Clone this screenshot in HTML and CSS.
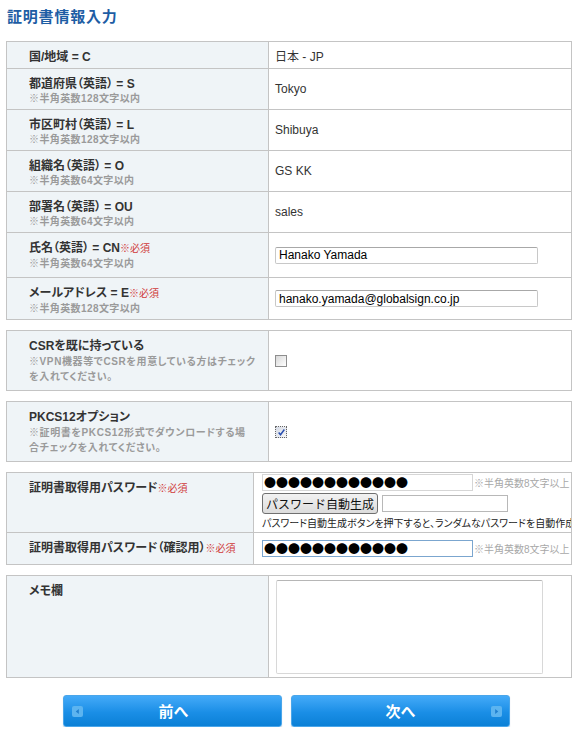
FILE: index.html
```html
<!DOCTYPE html>
<html lang="ja">
<head>
<meta charset="utf-8">
<title>証明書情報入力</title>
<link rel="stylesheet" href="styles.css">
</head>
<body>
<div class="page">
  <h1 class="title">証明書情報入力</h1>

  <table class="form">
    <colgroup><col class="c-label"><col></colgroup>
    <tr>
      <th class="label"><span class="main">国/地域 = C</span></th>
      <td class="value">日本 - JP</td>
    </tr>
    <tr>
      <th class="label"><span class="main">都道府県（英語） = S</span><span class="note">※半角英数128文字以内</span></th>
      <td class="value">Tokyo</td>
    </tr>
    <tr>
      <th class="label"><span class="main">市区町村（英語） = L</span><span class="note">※半角英数128文字以内</span></th>
      <td class="value">Shibuya</td>
    </tr>
    <tr>
      <th class="label"><span class="main">組織名（英語） = O</span><span class="note">※半角英数64文字以内</span></th>
      <td class="value">GS KK</td>
    </tr>
    <tr>
      <th class="label"><span class="main">部署名（英語） = OU</span><span class="note">※半角英数64文字以内</span></th>
      <td class="value">sales</td>
    </tr>
    <tr class="tall">
      <th class="label"><span class="main">氏名（英語） = CN<span class="req">※必須</span></span><span class="note">※半角英数64文字以内</span></th>
      <td class="value"><input class="field wide" type="text" value="Hanako Yamada"></td>
    </tr>
    <tr>
      <th class="label"><span class="main">メールアドレス = E<span class="req">※必須</span></span><span class="note">※半角英数128文字以内</span></th>
      <td class="value"><input class="field wide" type="text" value="hanako.yamada@globalsign.co.jp"></td>
    </tr>
  </table>

  <table class="form box">
    <colgroup><col class="c-label"><col></colgroup>
    <tr>
      <th class="label"><span class="main">CSRを既に持っている</span><span class="note spaced">※VPN機器等でCSRを用意している方はチェック<br>を入れてください。</span></th>
      <td class="value"><label class="chk"><input type="checkbox"><span class="box-mark"><svg viewBox="0 0 11 11" width="9" height="9"><path d="M2 5.5 L4.3 8.2 L9 1.8" fill="none" stroke="#2a4fb0" stroke-width="1.8"/></svg></span></label></td>
    </tr>
  </table>

  <table class="form box">
    <colgroup><col class="c-label"><col></colgroup>
    <tr>
      <th class="label"><span class="main">PKCS12オプション</span><span class="note spaced">※証明書をPKCS12形式でダウンロードする場<br>合チェックを入れてください。</span></th>
      <td class="value"><label class="chk"><input type="checkbox" checked><span class="box-mark"><svg viewBox="0 0 11 11" width="9" height="9"><path d="M2 5.5 L4.3 8.2 L9 1.8" fill="none" stroke="#2a4fb0" stroke-width="1.8"/></svg></span></label></td>
    </tr>
  </table>

  <table class="form pw">
    <colgroup><col class="c-label-pw"><col></colgroup>
    <tr>
      <th class="label top"><span class="main">証明書取得用パスワード<span class="req">※必須</span></span></th>
      <td class="value pwcell">
        <div class="pwline"><input class="field dots" type="text" value="●●●●●●●●●●●●"><span class="hint">※半角英数8文字以上</span></div>
        <div class="genline"><button class="gen" type="button">パスワード自動生成</button><input class="field gen-out" type="text"></div>
        <div class="explain">パスワード自動生成ボタンを押下すると、ランダムなパスワードを自動作成します。</div>
      </td>
    </tr>
    <tr>
      <th class="label mid"><span class="main">証明書取得用パスワード（確認用）<span class="req">※必須</span></span></th>
      <td class="value pwcell2">
        <div class="pwline"><input class="field dots focus" type="text" value="●●●●●●●●●●●●"><span class="hint">※半角英数8文字以上</span></div>
      </td>
    </tr>
  </table>

  <table class="form memo">
    <colgroup><col class="c-label"><col></colgroup>
    <tr>
      <th class="label top"><span class="main">メモ欄</span></th>
      <td class="value memocell"><textarea class="memo-area"></textarea></td>
    </tr>
  </table>

  <div class="nav">
    <button class="btn" type="button">
      <span class="ico"><svg viewBox="0 0 11 11" width="11" height="11"><rect x="0" y="0" width="11" height="11" rx="2" fill="#5cb4f0"/><path d="M6.8 3 L3.8 5.5 L6.8 8 Z" fill="#1f7fcf"/></svg></span>
      <span class="btn-text">前へ</span>
      <span></span>
    </button>
    <button class="btn" type="button">
      <span></span>
      <span class="btn-text">次へ</span>
      <span class="ico"><svg viewBox="0 0 11 11" width="11" height="11"><rect x="0" y="0" width="11" height="11" rx="2" fill="#5cb4f0"/><path d="M4.2 3 L7.2 5.5 L4.2 8 Z" fill="#1f7fcf"/></svg></span>
    </button>
  </div>
</div>
</body>
</html>
```
FILE: styles.css
```css
html, body {
  margin: 0;
  padding: 0;
  background: #ffffff;
}
body {
  font-family: "Liberation Sans", "Noto Sans CJK JP", sans-serif;
  font-feature-settings: "palt";
  color: #333333;
  font-size: 12px;
}
.page {
  width: 566px;
  padding: 0 6px;
}
.title {
  margin: 0 0 16px 1px;
  padding-top: 8px;
  font-size: 15px;
  line-height: 17px;
  font-weight: bold;
  color: #1d5da4;
  letter-spacing: 0.8px;
}
.form {
  width: 566px;
  border-collapse: collapse;
  table-layout: fixed;
  margin-bottom: 10px;
}
.form th, .form td {
  border: 1px solid #c4c4c4;
}
.c-label { width: 262px; }
.c-label-pw { width: 247px; }
.label {
  background: #eff4f7;
  text-align: left;
  font-weight: bold;
  padding: 7px 4px 3px 22px;
  vertical-align: top;
  white-space: nowrap;
}
.tall .label { padding-bottom: 6px; }
.label .main {
  display: block;
  font-size: 12px;
  line-height: 16px;
  color: #333333;
}
.label .note {
  display: block;
  font-size: 10px;
  line-height: 14px;
  color: #9a9a9a;
  letter-spacing: 0.4px;
}
.label .note.spaced {
  line-height: 15px;
  letter-spacing: 0.6px;
}
.box .label { padding-bottom: 6px; }
.req {
  font-weight: normal;
  font-size: 10px;
  color: #d03a3a;
}
.value {
  padding: 0 6px;
  vertical-align: middle;
  font-size: 12px;
  color: #333333;
  white-space: nowrap;
  overflow: hidden;
}
.field {
  box-sizing: border-box;
  height: 17px;
  border: 1px solid #c8c8c8;
  border-top-color: #a8a8a8;
  border-radius: 2px;
  padding: 0 3px;
  font-family: "Liberation Sans", "Noto Sans CJK JP", sans-serif;
  font-size: 12px;
  color: #000000;
  background: #ffffff;
  margin: 0;
}
.field.wide { width: 263px; display: block; }

.chk { display: inline-block; vertical-align: middle; }
.chk input { display: none; }
.box-mark {
  display: flex;
  align-items: center;
  justify-content: center;
  box-sizing: border-box;
  width: 12px;
  height: 12px;
  border: 1px solid #8e8e8e;
  background: linear-gradient(135deg, #d8d8d8, #ffffff);
}
.box-mark svg { display: none; }
.chk input:checked + .box-mark {
  border-style: dotted;
  border-color: #666;
  background: linear-gradient(135deg, #d6dbe6, #f6f6f6);
}
.chk input:checked + .box-mark svg { display: block; }

.top { vertical-align: top; }
.mid { vertical-align: middle; padding-top: 4px; padding-bottom: 4px; }
.pw .label { padding-left: 22px; }
.pwcell { padding: 1px 0 0 8px; vertical-align: top; }
.pwcell2 { padding: 7px 0 7px 8px; }
.pwline { display: flex; align-items: center; height: 17px; }
.dots {
  width: 211px;
  padding: 0 1px;
  font-family: "Noto Sans CJK JP", sans-serif;
  font-size: 12px;
  line-height: 15px;
  border-color: #d6d6d6;
  border-radius: 0;
}
.dots.focus { border-color: #7ba6cf; }
.hint {
  font-size: 10px;
  color: #a8a8a8;
  margin-left: 1px;
}
.genline {
  display: flex;
  align-items: center;
  gap: 4px;
  margin-top: 2px;
}
.gen {
  box-sizing: border-box;
  height: 21px;
  padding: 0 3px;
  border: 1px solid #707070;
  border-radius: 3px;
  background: linear-gradient(#f2f2f2, #dcdcdc);
  font-family: "Noto Sans CJK JP", sans-serif;
  font-size: 12px;
  line-height: 18px;
  color: #111111;
}
.gen-out { width: 126px; border-color: #b8b8b8; border-radius: 0; }
.explain {
  font-family: "Noto Sans CJK JP", sans-serif;
  font-size: 10px;
  line-height: 18px;
  color: #222222;
  white-space: nowrap;
}
.memocell { padding: 4px 0 3px 7px; vertical-align: top; }
.memo-area {
  display: block;
  box-sizing: border-box;
  width: 267px;
  height: 94px;
  margin: 0;
  border: 1px solid #d8d8d8;
  border-top-color: #b6b6b6;
  border-radius: 2px;
  resize: none;
  background: #ffffff;
}
.memo { margin-bottom: 0; }
.nav {
  display: flex;
  justify-content: center;
  gap: 9px;
  padding: 17px 5px 0 0;
}
.btn {
  box-sizing: border-box;
  width: 219px;
  height: 32px;
  display: grid;
  grid-template-columns: 20px 1fr 20px;
  align-items: center;
  padding: 0 6px 0 8px;
  border: 1px solid #4aa6ea;
  border-radius: 3px;
  background: linear-gradient(#44aaf8, #1a8ee6 55%, #0b80d6);
  box-shadow: 0 1px 1px rgba(0, 60, 120, 0.25);
  color: #ffffff;
  font-family: "Noto Sans CJK JP", sans-serif;
  cursor: pointer;
}
.btn:last-child { padding: 0 7px 0 7px; }
.ico { display: flex; align-items: center; }
.btn:last-child .ico { justify-content: flex-end; }
.btn-text {
  font-size: 15px;
  font-weight: bold;
  text-align: center;
  line-height: 20px;
}
```
